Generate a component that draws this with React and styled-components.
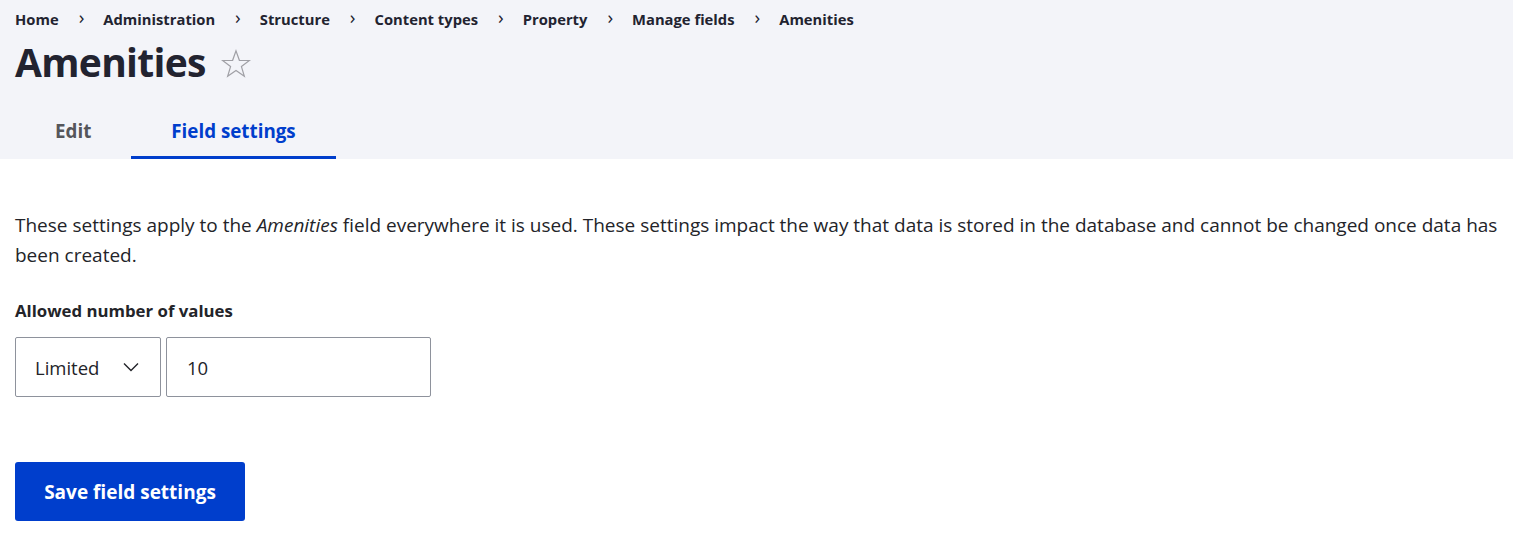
import React from 'react';
import styled, { createGlobalStyle } from 'styled-components';

const GlobalStyle = createGlobalStyle`
  html, body {
    margin: 0;
    padding: 0;
    background: #ffffff;
    font-family: "Open Sans", "Noto Sans", sans-serif;
    color: #232429;
  }
`;

const Header = styled.div`
  background-color: #f3f4f9;
  padding: 0 15px;
`;

const Breadcrumb = styled.ol`
  display: flex;
  align-items: center;
  list-style: none;
  margin: 0;
  padding: 8px 0 0;
  font-size: 14.75px;
  font-weight: 700;
  line-height: 20px;
  color: #222330;
`;

const Crumb = styled.li`
  display: flex;
  align-items: center;

  & + &::before {
    content: '›';
    font-size: 19px;
    font-weight: 400;
    margin: 0 19px 2px 20px;
    line-height: 1;
  }
`;

const TitleRow = styled.div`
  display: flex;
  align-items: center;
  gap: 15px;
  margin-top: 9px;
`;

const Title = styled.h1`
  margin: 0;
  font-size: 39px;
  font-weight: 700;
  line-height: 48px;
  letter-spacing: -0.7px;
  color: #222330;
`;

const StarButton = styled.span`
  display: inline-flex;
  margin-top: 2px;
`;

const Tabs = styled.nav`
  display: flex;
  margin-top: 24px;
`;

const Tab = styled.a`
  display: block;
  padding: 0 40px;
  height: 49px;
  line-height: 42px;
  font-size: 18.8px;
  font-weight: 700;
  color: ${p => (p.$active ? '#003ecc' : '#55565b')};
  border-bottom: 3px solid ${p => (p.$active ? '#003ecc' : 'transparent')};
  box-sizing: border-box;
  text-decoration: none;
`;

const Content = styled.main`
  padding: 51px 6px 0 15px;
`;

const Description = styled.p`
  margin: 0;
  font-size: 19px;
  line-height: 30px;
  color: #232429;
`;

const Label = styled.label`
  display: block;
  margin-top: 29px;
  font-size: 16.8px;
  font-weight: 700;
  line-height: 24px;
  color: #232429;
`;

const FieldRow = styled.div`
  display: flex;
  gap: 5px;
  margin-top: 14px;
`;

const Select = styled.div`
  box-sizing: border-box;
  width: 146px;
  height: 60px;
  border: 1px solid #8e929c;
  border-radius: 2px;
  display: flex;
  align-items: center;
  justify-content: space-between;
  padding: 0 21px 0 19px;
  font-size: 18.5px;
  color: #232429;
  background: #fff;
`;

const Input = styled.div`
  box-sizing: border-box;
  width: 265px;
  height: 60px;
  border: 1px solid #8e929c;
  border-radius: 2px;
  display: flex;
  align-items: center;
  padding: 0 20px;
  font-size: 18.5px;
  color: #232429;
`;

const SaveButton = styled.button`
  display: block;
  margin-top: 65px;
  width: 230px;
  height: 59px;
  border: 0;
  border-radius: 3px;
  background: #003ecc;
  color: #fff;
  font-family: inherit;
  font-size: 19px;
  font-weight: 700;
  cursor: pointer;
`;

const StarIcon = () => (
  <svg width="30" height="29" viewBox="0 0 32 30">
    <path
      d="M16 1.5 L19.6 11.6 L30.3 11.8 L21.8 18.3 L24.9 28.6 L16 22.5 L7.1 28.6 L10.2 18.3 L1.7 11.8 L12.4 11.6 Z"
      fill="none"
      stroke="#a0a0a6"
      strokeWidth="1.3"
      strokeLinejoin="miter"
    />
  </svg>
);

const ChevronIcon = () => (
  <svg width="16" height="10" viewBox="0 0 16 10">
    <path d="M1 1.5 L8 8.5 L15 1.5" fill="none" stroke="#232429" strokeWidth="1.4" />
  </svg>
);

const crumbs = ['Home', 'Administration', 'Structure', 'Content types', 'Property', 'Manage fields', 'Amenities'];

export default function App() {
  return (
    <>
      <GlobalStyle />
      <Header>
        <Breadcrumb>
          {crumbs.map(c => (
            <Crumb key={c}>{c}</Crumb>
          ))}
        </Breadcrumb>
        <TitleRow>
          <Title>Amenities</Title>
          <StarButton>
            <StarIcon />
          </StarButton>
        </TitleRow>
        <Tabs>
          <Tab>Edit</Tab>
          <Tab $active>Field settings</Tab>
        </Tabs>
      </Header>
      <Content>
        <Description>
          These settings apply to the <em>Amenities</em> field everywhere it is used. These settings impact the way
          that data is stored in the database and cannot be changed once data has been created.
        </Description>
        <Label>Allowed number of values</Label>
        <FieldRow>
          <Select>
            <span>Limited</span>
            <ChevronIcon />
          </Select>
          <Input>10</Input>
        </FieldRow>
        <SaveButton>Save field settings</SaveButton>
      </Content>
    </>
  );
}
